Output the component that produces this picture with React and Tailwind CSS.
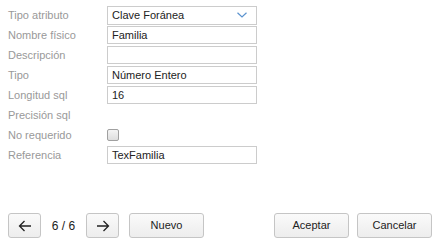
import React from "react";

const font = { fontFamily: '"Liberation Sans", Arial, sans-serif' };

function Row({ label, children }) {
  return (
    <div className="flex h-[20px] items-center">
      <div className="w-[99px] text-[11px] text-[#999999]">{label}</div>
      <div className="flex items-center">{children}</div>
    </div>
  );
}

function Input({ value }) {
  return (
    <div className="box-border flex h-[18px] w-[150px] items-center border border-[#cccccc] bg-white pl-[4px] text-[11px] text-[#222222]">
      {value}
    </div>
  );
}

function Btn({ children, w }) {
  return (
    <button
      className={`box-border flex h-[25px] ${w} items-center justify-center rounded-[3px] border border-[#c5c5c5] bg-gradient-to-b from-[#fafafa] to-[#ededed] text-[11px] text-[#222222]`}
    >
      {children}
    </button>
  );
}

export default function App() {
  return (
    <div className="flex h-[245px] w-[441px] flex-col justify-between bg-white" style={font}>
      <div className="flex flex-col pl-[8px] pt-[5px]">
        <Row label="Tipo atributo">
          <div className="box-border flex h-[19px] w-[150px] items-center justify-between border border-[#cccccc] bg-white pl-[4px] pr-[9px] text-[11px] text-[#222222]">
            <span>Clave Foránea</span>
            <svg width="10" height="6" viewBox="0 0 10 6">
              <path d="M0.5 0.8 L5 5 L9.5 0.8" fill="none" stroke="#5b93cf" strokeWidth="1.2" />
            </svg>
          </div>
        </Row>
        <Row label="Nombre físico"><Input value="Familia" /></Row>
        <Row label="Descripción"><Input value="" /></Row>
        <Row label="Tipo"><Input value="Número Entero" /></Row>
        <Row label="Longitud sql"><Input value="16" /></Row>
        <Row label="Precisión sql"></Row>
        <Row label="No requerido">
          <div className="box-border h-[12px] w-[12px] rounded-[2px] border border-[#a0a0a0] bg-gradient-to-b from-[#f4f4f4] to-[#dedede]" />
        </Row>
        <Row label="Referencia"><Input value="TexFamilia" /></Row>
      </div>
      <div className="flex items-center justify-between pb-[7px] pl-[8px] pr-[9px]">
        <div className="flex items-center">
          <Btn w="w-[33px]">
            <svg width="14" height="12" viewBox="0 0 14 12">
              <path d="M13 6 H1.5 M6.5 1 L1.5 6 L6.5 11" fill="none" stroke="#222" strokeWidth="1.3" />
            </svg>
          </Btn>
          <span className="w-[45px] text-center text-[12px] text-[#222222]">6 / 6</span>
          <Btn w="w-[33px]">
            <svg width="14" height="12" viewBox="0 0 14 12">
              <path d="M1 6 H12.5 M7.5 1 L12.5 6 L7.5 11" fill="none" stroke="#222" strokeWidth="1.3" />
            </svg>
          </Btn>
          <div className="w-[10px]" />
          <Btn w="w-[75px]">Nuevo</Btn>
        </div>
        <div className="flex items-center gap-[8px]">
          <Btn w="w-[75px]">Aceptar</Btn>
          <Btn w="w-[75px]">Cancelar</Btn>
        </div>
      </div>
    </div>
  );
}
